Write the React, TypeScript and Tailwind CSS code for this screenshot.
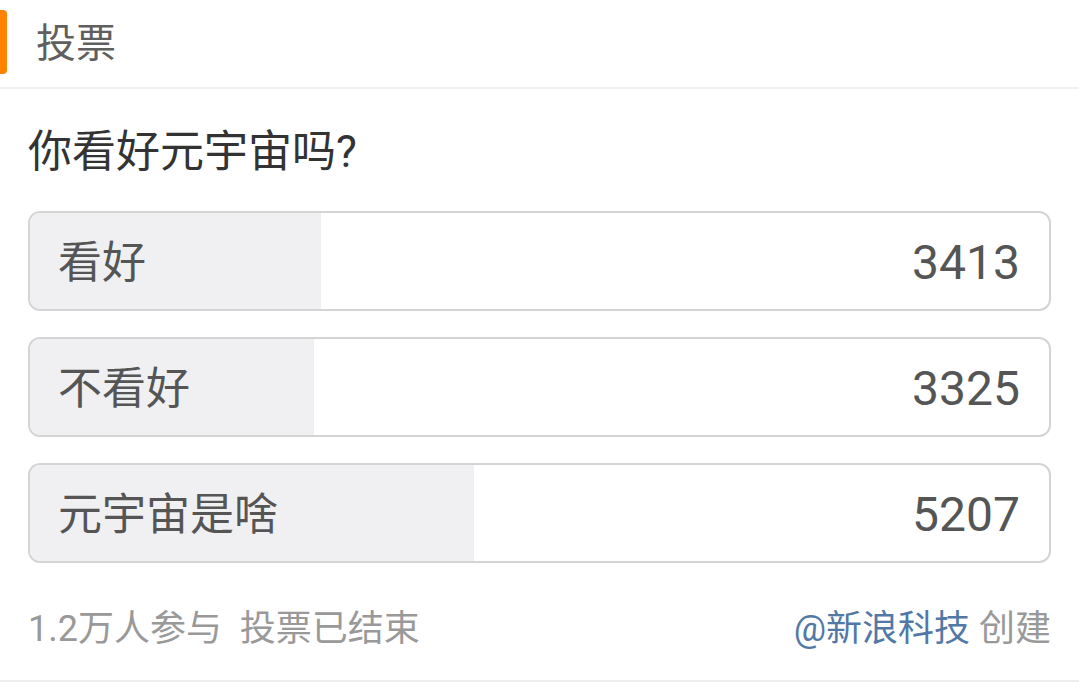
import React from "react";

const options = [
  { label: "看好", count: 3413 },
  { label: "不看好", count: 3325 },
  { label: "元宇宙是啥", count: 5207 },
];

const total = options.reduce((s, o) => s + o.count, 0);

export default function App() {
  return (
    <div
      className="w-[1079px] h-[682px] bg-white overflow-hidden"
      style={{ fontFamily: 'Roboto, "Noto Sans CJK SC", sans-serif' }}
    >
      <div className="h-[89px] flex items-center border-b-2 border-[#efefef]">
        <div className="w-[7px] h-[64px] bg-[#ff8200] rounded-r-[4px] mt-[-4px]" />
        <div className="ml-[29px] text-[40px] leading-none text-[#5f5f5f]">投票</div>
      </div>
      <div className="px-[28px]">
        <div className="h-[122px] pt-[3px] flex items-center text-[44px] leading-none text-[#333333]">
          你看好元宇宙吗?
        </div>
        <div className="flex flex-col gap-[26px]">
          {options.map((o) => (
            <div
              key={o.label}
              className="relative h-[100px] rounded-[12px] border-2 border-[#d4d4d4] overflow-hidden"
            >
              <div
                className="absolute left-0 top-0 bottom-0 bg-[#f0f0f2]"
                style={{ width: `${(o.count / total) * 100}%` }}
              />
              <div className="relative h-full flex items-center justify-between pt-[3px] pl-[28px] pr-[29px] text-[#555555]">
                <span className="text-[44px] leading-none">{o.label}</span>
                <span className="text-[48px] leading-none">{o.count}</span>
              </div>
            </div>
          ))}
        </div>
        <div className="mt-[31px] h-[70px] flex items-center justify-between text-[36px] leading-none text-[#999999]">
          <span>1.2万人参与&nbsp;&nbsp;投票已结束</span>
          <span>
            <span className="text-[#5279a6]">@新浪科技</span> 创建
          </span>
        </div>
      </div>
      <div className="mt-[16px] border-t-[3px] border-[#eeeeee]" />
    </div>
  );
}
